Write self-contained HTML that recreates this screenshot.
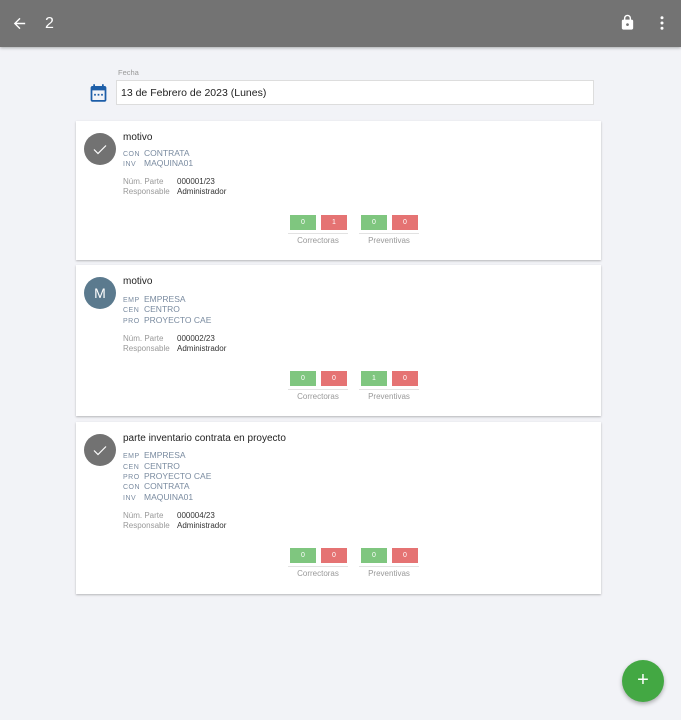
<!DOCTYPE html>
<html><head><meta charset="utf-8"><style>
*{margin:0;padding:0;box-sizing:border-box}
body{width:681px;height:720px;background:#f2f3f7;font-family:"Liberation Sans",sans-serif;position:relative;overflow:hidden}
.hdr{position:absolute;left:0;top:0;width:681px;height:47px;background:#737373;box-shadow:0 1px 3px rgba(0,0,0,.3)}
.a{position:absolute}
.card{position:absolute;left:76px;width:525px;background:#fff;box-shadow:0 1px 2px rgba(0,0,0,.25)}
.av{position:absolute;left:8px;top:12px;width:32px;height:32px;border-radius:50%;background:#727272;color:#fff;text-align:center;line-height:32px;font-size:14px}
.t{position:absolute;left:47px;top:11px;font-size:10px;color:#222}
.l{position:absolute;left:47px;font-size:8.5px;color:#7a8ba0;white-space:nowrap}
.l b{display:inline-block;width:21px;font-weight:normal;font-size:7px;letter-spacing:.5px;color:#7a8ba0}
.n{position:absolute;left:47px;font-size:8px;color:#999;white-space:nowrap}
.n span{position:absolute;left:54px;color:#333}
.bd{position:absolute;width:26px;height:15px;color:#fff;font-size:7px;text-align:center;line-height:15px}
.g{background:#7fc67f}.r{background:#e57373}
.ul{position:absolute;height:1px;background:#e2e2e2;width:60px}
.lb{position:absolute;width:60px;text-align:center;font-size:8px;color:#999}
</style></head><body>
<div class="hdr">
<svg class="a" style="left:11px;top:15px" width="17" height="17" viewBox="0 0 24 24"><path d="M20 11H7.8l5.6-5.6L12 4l-8 8 8 8 1.4-1.4L7.8 13H20z" fill="#fff"/></svg>
<div class="a" style="left:45px;top:15px;color:#fff;font-size:16px">2</div>
<svg class="a" style="left:619px;top:13px" width="17" height="19" viewBox="0 0 24 24"><path d="M18 8h-1V6c0-2.8-2.2-5-5-5S7 3.2 7 6v2H6c-1.1 0-2 .9-2 2v10c0 1.1.9 2 2 2h12c1.1 0 2-.9 2-2V10c0-1.1-.9-2-2-2zM9 6c0-1.7 1.3-3 3-3s3 1.3 3 3v2H9zm3 11c-1.1 0-2-.9-2-2s.9-2 2-2 2 .9 2 2-.9 2-2 2z" fill="#fff"/></svg>
<svg class="a" style="left:653px;top:14px" width="18" height="18" viewBox="0 0 24 24"><circle cx="12" cy="5" r="2" fill="#fff"/><circle cx="12" cy="12" r="2" fill="#fff"/><circle cx="12" cy="19" r="2" fill="#fff"/></svg>
</div>
<div class="a" style="left:118px;top:68px;font-size:7.5px;color:#999">Fecha</div>
<svg class="a" style="left:88px;top:82px" width="21" height="22" viewBox="0 0 24 24"><path d="M19 4h-1V2h-2v2H8V2H6v2H5c-1.1 0-2 .9-2 2v14c0 1.1.9 2 2 2h14c1.1 0 2-.9 2-2V6c0-1.1-.9-2-2-2zm0 16H5V9h14zM7 13h2v2H7zm4 0h2v2h-2zm4 0h2v2h-2z" fill="#1d5ea8"/></svg>
<div class="a" style="left:116px;top:80px;width:478px;height:25px;background:#fff;border:1px solid #ddd;font-size:10.5px;line-height:24px;padding-left:4px;color:#222">13 de Febrero de 2023 (Lunes)</div>

<div class="card" style="top:121px;height:139px">
<div class="av"><svg width="32" height="32" viewBox="0 0 32 32"><path d="M10 16.5l4 4 8-8" stroke="#fff" stroke-width="1.2" fill="none"/></svg></div>
<div class="t">motivo</div>
<div class="l" style="top:27px"><b>CON</b>CONTRATA</div>
<div class="l" style="top:37px"><b>INV</b>MAQUINA01</div>
<div class="n" style="top:56px">Núm. Parte<span>000001/23</span></div>
<div class="n" style="top:66px">Responsable<span>Administrador</span></div>
<div class="bd g" style="left:214px;top:94px">0</div><div class="bd r" style="left:245px;top:94px">1</div>
<div class="bd g" style="left:285px;top:94px">0</div><div class="bd r" style="left:316px;top:94px">0</div>
<div class="ul" style="left:212px;top:112px"></div><div class="ul" style="left:283px;top:112px"></div>
<div class="lb" style="left:212px;top:115px">Correctoras</div><div class="lb" style="left:283px;top:115px">Preventivas</div>
</div>

<div class="card" style="top:265px;height:151px">
<div class="av" style="background:#5b7a8e">M</div>
<div class="t">motivo</div>
<div class="l" style="top:29px"><b>EMP</b>EMPRESA</div>
<div class="l" style="top:39px"><b>CEN</b>CENTRO</div>
<div class="l" style="top:50px"><b>PRO</b>PROYECTO CAE</div>
<div class="n" style="top:69px">Núm. Parte<span>000002/23</span></div>
<div class="n" style="top:79px">Responsable<span>Administrador</span></div>
<div class="bd g" style="left:214px;top:106px">0</div><div class="bd r" style="left:245px;top:106px">0</div>
<div class="bd g" style="left:285px;top:106px">1</div><div class="bd r" style="left:316px;top:106px">0</div>
<div class="ul" style="left:212px;top:124px"></div><div class="ul" style="left:283px;top:124px"></div>
<div class="lb" style="left:212px;top:127px">Correctoras</div><div class="lb" style="left:283px;top:127px">Preventivas</div>
</div>

<div class="card" style="top:422px;height:172px">
<div class="av"><svg width="32" height="32" viewBox="0 0 32 32"><path d="M10 16.5l4 4 8-8" stroke="#fff" stroke-width="1.2" fill="none"/></svg></div>
<div class="t">parte inventario contrata en proyecto</div>
<div class="l" style="top:28px"><b>EMP</b>EMPRESA</div>
<div class="l" style="top:39px"><b>CEN</b>CENTRO</div>
<div class="l" style="top:49px"><b>PRO</b>PROYECTO CAE</div>
<div class="l" style="top:59px"><b>CON</b>CONTRATA</div>
<div class="l" style="top:70px"><b>INV</b>MAQUINA01</div>
<div class="n" style="top:89px">Núm. Parte<span>000004/23</span></div>
<div class="n" style="top:99px">Responsable<span>Administrador</span></div>
<div class="bd g" style="left:214px;top:126px">0</div><div class="bd r" style="left:245px;top:126px">0</div>
<div class="bd g" style="left:285px;top:126px">0</div><div class="bd r" style="left:316px;top:126px">0</div>
<div class="ul" style="left:212px;top:144px"></div><div class="ul" style="left:283px;top:144px"></div>
<div class="lb" style="left:212px;top:147px">Correctoras</div><div class="lb" style="left:283px;top:147px">Preventivas</div>
</div>

<div class="a" style="left:622px;top:660px;width:42px;height:42px;border-radius:50%;background:#43a843;box-shadow:0 2px 4px rgba(0,0,0,.3);color:#fff;text-align:center;line-height:41px;font-size:20px">+</div>
</body></html>
